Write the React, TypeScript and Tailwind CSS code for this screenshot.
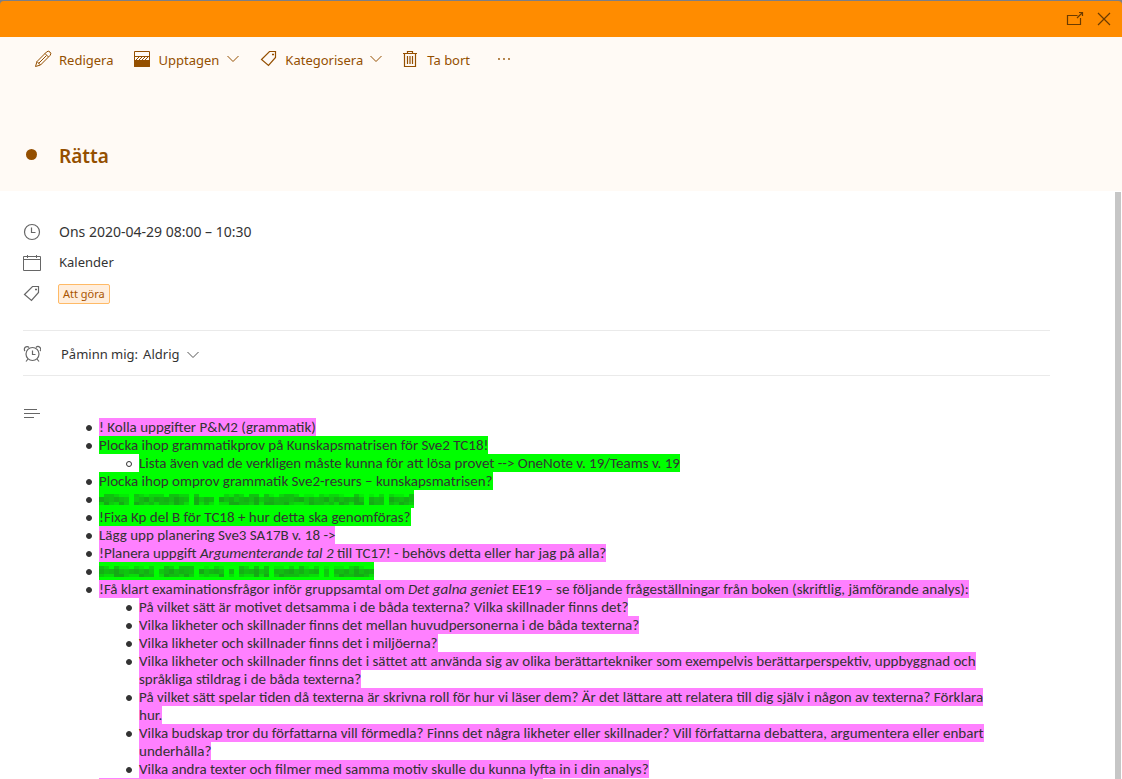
import type { ReactNode } from 'react';

type Mark = 'pink' | 'green';

interface NoteItem {
  text?: ReactNode;
  mark: Mark;
  // one digit per mosaic cell, 0 is a blank
  hidden?: string;
  children?: NoteItem[];
  hollow?: boolean;
}

const MARKS: Record<Mark, string> = {
  pink: 'bg-[#ff80ff]',
  green: 'bg-[#00ff00]',
};

const CELL = 5;

const NOTES: NoteItem[] = [
  { mark: 'pink', text: '! Kolla uppgifter P&M2 (grammatik)' },
  {
    mark: 'green',
    text: 'Plocka ihop grammatikprov på Kunskapsmatrisen för Sve2 TC18!',
    hollow: true,
    children: [
      { mark: 'green', text: 'Lista även vad de verkligen måste kunna för att lösa provet --> OneNote v. 19/Teams v. 19' },
    ],
  },
  { mark: 'green', text: 'Plocka ihop omprov grammatik Sve2-resurs – kunskapsmatrisen?' },
  { mark: 'green', hidden: '865754046847675865084760857467584675665784756847576850756086575' },
  { mark: 'green', text: '!Fixa Kp del B för TC18 + hur detta ska genomföras?' },
  { mark: 'pink', text: 'Lägg upp planering Sve3 SA17B v. 18 ->' },
  {
    mark: 'pink',
    text: (
      <>
        !Planera uppgift <em>Argumenterande tal 2</em> till TC17! - behövs detta eller har jag på alla?
      </>
    ),
  },
  { mark: 'green', hidden: '7568546757404685765084675060756846065785746704065748576' },
  {
    mark: 'pink',
    text: (
      <>
        !Få klart examinationsfrågor inför gruppsamtal om <em>Det galna geniet</em> EE19 – se följande frågeställningar
        från boken (skriftlig, jämförande analys):
      </>
    ),
    children: [
      { mark: 'pink', text: 'På vilket sätt är motivet detsamma i de båda texterna? Vilka skillnader finns det?' },
      { mark: 'pink', text: 'Vilka likheter och skillnader finns det mellan huvudpersonerna i de båda texterna?' },
      { mark: 'pink', text: 'Vilka likheter och skillnader finns det i miljöerna?' },
      {
        mark: 'pink',
        text: 'Vilka likheter och skillnader finns det i sättet att använda sig av olika berättartekniker som exempelvis berättarperspektiv, uppbyggnad och språkliga stildrag i de båda texterna?',
      },
      {
        mark: 'pink',
        text: 'På vilket sätt spelar tiden då texterna är skrivna roll för hur vi läser dem? Är det lättare att relatera till dig själv i någon av texterna? Förklara hur.',
      },
      {
        mark: 'pink',
        text: 'Vilka budskap tror du författarna vill förmedla? Finns det några likheter eller skillnader? Vill författarna debattera, argumentera eller enbart underhålla?',
      },
      { mark: 'pink', text: 'Vilka andra texter och filmer med samma motiv skulle du kunna lyfta in i din analys?' },
    ],
  },
];

function Icon({ children, className = '' }: { children: ReactNode; className?: string }) {
  return (
    <svg
      viewBox="0 0 18 18"
      fill="none"
      stroke="currentColor"
      className={`h-[18px] w-[18px] shrink-0 ${className}`}
      aria-hidden="true"
    >
      {children}
    </svg>
  );
}

function TagIcon({ className = '' }: { className?: string }) {
  return (
    <Icon className={className}>
      <path d="M9.500 1.500h6v6L8.500 15.500 1.500 9.500z" strokeWidth="1.200" />
      <path d="M12.500 4h1v1h-1z" />
    </Icon>
  );
}

function Chevron({ className = '' }: { className?: string }) {
  return (
    <svg
      viewBox="0 0 12 8"
      fill="none"
      stroke="currentColor"
      className={`h-2 w-3 shrink-0 ${className}`}
      aria-hidden="true"
    >
      <path d="M.5 1l5.500 5.500L11.500 1" />
    </svg>
  );
}

// Pixelated line standing in for censored text
function Mosaic({ levels }: { levels: string }) {
  const width = levels.length * CELL;
  return (
    <svg width={width} height="18" shapeRendering="crispEdges" className="block bg-[#00ff00]" aria-hidden="true">
      {levels.split('').map((digit, i) => {
        const level = Number(digit);
        if (!level) return null;
        return (
          <g key={i} fill="#2a552a">
            <rect x={i * CELL} y="4" width={CELL} height="3" opacity={((level * 5 + i) % 4) * 0.12} />
            <rect x={i * CELL} y="7" width={CELL} height="5" opacity={0.15 + level * 0.045} />
            <rect x={i * CELL} y="12" width={CELL} height="3" opacity={(((level * 3 + i) % 4) + 2) * 0.1} />
          </g>
        );
      })}
    </svg>
  );
}

function NoteList({ items, nested, hollow }: { items: NoteItem[]; nested?: boolean; hollow?: boolean }) {
  return (
    <ul className="pl-10">
      {items.map((item, i) => (
        <li key={i} className="relative">
          <span
            className={`absolute top-[7px] -left-[13px] h-[6px] w-[6px] rounded-full border border-[#333333] ${
              hollow ? '' : 'bg-[#333333]'
            }`}
          />
          {item.hidden ? (
            <Mosaic levels={item.hidden} />
          ) : (
            <span className={MARKS[item.mark]}>{item.text}</span>
          )}
          {item.children && <NoteList items={item.children} nested hollow={item.hollow} />}
        </li>
      ))}
      {!nested && <li className="h-[18px] w-[444px] bg-[#ff80ff]" />}
    </ul>
  );
}

export default function App() {
  return (
    <div className="flex h-screen flex-col overflow-hidden bg-[#7c7f86] pt-px font-['Noto_Sans',sans-serif] text-[13px] text-[#333333]">
      <header className="flex h-9 shrink-0 items-center justify-end gap-[11px] rounded-t bg-[#ff8c00] pr-[9px] text-[#6b3b00]">
        <button type="button" aria-label="Öppna i nytt fönster">
          <Icon>
            <path d="M11.500 5.500H1.500v9h13V8" strokeWidth="1.200" />
            <path d="M11 8l5.500-5.500M13 2.500h3.500V6" strokeWidth="1.200" />
          </Icon>
        </button>
        <button type="button" aria-label="Stäng">
          <Icon>
            <path d="M3 3l12 12M15 3L3 15" strokeWidth="1.200" />
          </Icon>
        </button>
      </header>

      <section className="h-[154px] shrink-0 bg-[#fffaf5] text-[#944f00]">
        <div className="flex h-12 items-center pl-[34px]">
          <button type="button" className="flex items-center gap-[7px]">
            <Icon className="mb-1">
              <path d="M1.500 16.500l1.500-5L12.500 2a2.200 2.200 0 0 1 3.500 3.500L6.500 15zM3 11.500L6.500 15M11 3.500L14.500 7M4.500 13.500l8-8" />
            </Icon>
            Redigera
          </button>
          <button type="button" className="ml-[19px] flex items-center gap-2">
            <Icon className="mb-1">
              <path d="M1.500 1.500h15v15h-15zM1 6.500h16M3 10l3-3M6 10l3-3M9 10l3-3M12 10l3-3" />
              <path d="M1.500 10.500h15v6h-15z" fill="currentColor" />
            </Icon>
            Upptagen
            <Chevron className="mb-1" />
          </button>
          <button type="button" className="ml-[21px] flex items-center gap-[7px]">
            <TagIcon className="mb-1" />
            Kategorisera
            <Chevron className="mb-1" />
          </button>
          <button type="button" className="ml-[19px] flex items-center gap-2">
            <Icon className="mb-1">
              <path
                d="M2 3.500h14M6.500 3V1.500h5V3M3.500 3.500v13h11v-13M6.500 6v8M9 6v8M11.500 6v8"
                strokeWidth="1.200"
              />
            </Icon>
            Ta bort
          </button>
          <button type="button" aria-label="Fler alternativ" className="mb-1 ml-7">
            <svg viewBox="0 0 12 4" fill="currentColor" className="h-1 w-3">
              <circle cx="1" cy="2" r=".9" />
              <circle cx="6" cy="2" r=".9" />
              <circle cx="11" cy="2" r=".9" />
            </svg>
          </button>
        </div>
        <div className="mt-[57px] flex items-center pl-[26px]">
          <span className="mb-1 h-[11px] w-[11px] rounded-full bg-[#944f00]" />
          <h1 className="ml-[22px] text-[19px] leading-7 font-semibold">Rätta</h1>
        </div>
      </section>

      <main className="min-h-0 flex-1 overflow-hidden bg-white">
        <div className="flex h-full">
          <div className="min-w-0 flex-1 pr-[65px] pl-[23px]">
            <div className="flex flex-col pt-[25px] pb-[21px]">
              <div className="flex h-[31px] items-center gap-[18px] text-sm">
                <Icon className="text-[#666666]">
                  <circle cx="9" cy="9" r="7.500" strokeWidth="1.200" />
                  <path d="M8.500 4.500v5h4" strokeWidth="1.200" />
                </Icon>
                Ons 2020-04-29 08:00 – 10:30
              </div>
              <div className="flex h-[31px] items-center gap-[18px]">
                <Icon className="text-[#666666]">
                  <path d="M.5 2.500h17v14H.500zM.5 5.500h17M4.500 1v3M13.500 1v3" />
                </Icon>
                Kalender
              </div>
              <div className="flex h-[31px] items-center gap-[17px]">
                <TagIcon className="text-[#666666]" />
                <span className="rounded-xs border border-[#ffba66] bg-[#ffeedd] px-1 text-[11px] leading-[18px] text-[#a85400]">
                  Att göra
                </span>
              </div>
            </div>

            <div className="flex h-[46px] items-center border-y border-[#eaeaea] pt-1">
              <Icon className="mb-0.5 text-[#666666]">
                <circle cx="9.500" cy="9" r="6.500" strokeWidth="1.200" />
                <path
                  d="M9.500 5.500v4h3M5 14l-2 2.500M14 14l2 2.500M2 6a2.500 2.500 0 1 1 4-3.500M17 6a2.500 2.500 0 1 0-4-3.500"
                  strokeWidth="1.200"
                />
              </Icon>
              <span className="ml-5">Påminn mig:</span>
              <button type="button" className="ml-[5px] flex items-center gap-2">
                Aldrig
                <Chevron className="text-[#555555]" />
              </button>
            </div>

            <div className="flex pt-7">
              <Icon className="text-[#666666]">
                <path d="M1 5.500h13M1 9.500h16M1 13.500h10" />
              </Icon>
              <div className="min-w-0 flex-1 pt-[14px] pr-12 pl-[18px] font-[Calibri,Carlito,Lato,sans-serif] text-[15px] leading-[18px]">
                <NoteList items={NOTES} />
              </div>
            </div>
          </div>
          <div className="mt-px mr-px w-[6px] shrink-0 bg-[#c6c6c6]" />
        </div>
      </main>
    </div>
  );
}
